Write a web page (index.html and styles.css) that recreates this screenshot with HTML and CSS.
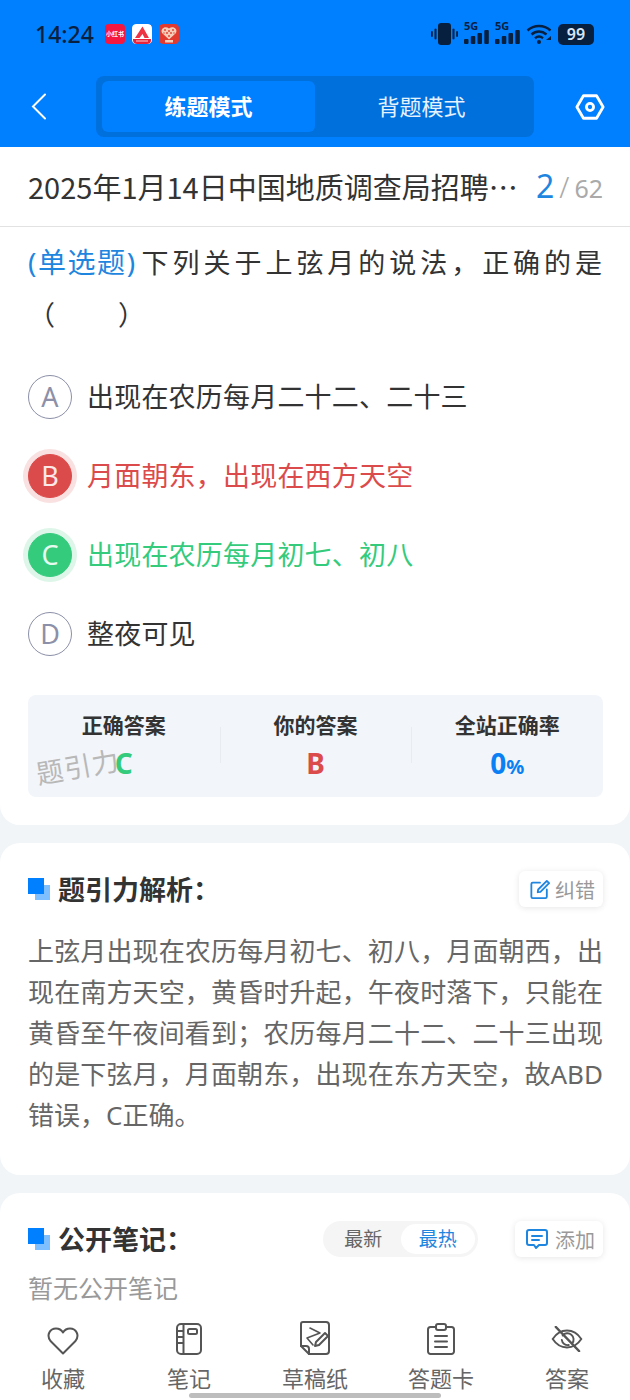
FILE: index.html
```html
<!DOCTYPE html>
<html lang="zh-CN">
<head>
    <meta charset="UTF-8">
    <meta name="viewport" content="width=device-width, initial-scale=1.0">
    <title>练题模式</title>
    <link rel="stylesheet" href="styles.css">
</head>
<body>
<div class="page">
    <header class="top">
        <div class="status">
            <span class="time">14:24</span>
            <div class="app-icons">
                <span class="app app-red">小红书</span>
                <svg class="app" viewBox="0 0 20 20"><rect width="20" height="20" rx="4" fill="#fff"/><path d="M3 14 L10.500 2.500 L17 14 L12.500 14 L10.500 10 L7.500 14Z" fill="#ee3344"/><path d="M1 15 H19 V16 A4 4 0 0 1 15 20 H5 A4 4 0 0 1 1 16Z" fill="#e8243c"/><rect x="4" y="16.500" width="12" height="1" fill="#fbd0d4"/></svg>
                <svg class="app" viewBox="0 0 20 20"><rect width="20" height="20" rx="4" fill="#e23a2e"/><path d="M10 15.500 L3 9 C1 5 6 1.500 10 4.500 C14 1.500 19 5 17 9Z" fill="#f5cdb9"/><g fill="#e23a2e"><circle cx="6" cy="6" r=".9"/><circle cx="10" cy="7" r=".9"/><circle cx="14" cy="6" r=".9"/><circle cx="8" cy="9" r=".9"/><circle cx="12" cy="9" r=".9"/><circle cx="5" cy="9" r=".7"/><circle cx="15" cy="9" r=".7"/><circle cx="10" cy="12" r=".9"/></g><rect x="6" y="16" width="8" height="2.500" fill="#f5cdb9"/></svg>
            </div>
            <div class="sys-icons">
                <svg width="27" height="22" viewBox="0 0 27 22" fill="#07203f"><rect x="7" width="13" height="22" rx="3"/><rect x="3.500" y="5.500" width="2" height="11" rx="1"/><rect y="8" width="1.800" height="6" rx=".9"/><rect x="21.500" y="5.500" width="2" height="11" rx="1"/><rect x="25.200" y="8" width="1.800" height="6" rx=".9"/></svg>
                <div class="net"><span>5G</span><svg width="25" height="22" viewBox="0 0 25 22" fill="#07203f"><rect y="16" width="4.500" height="5" rx="1"/><rect x="6.800" y="13" width="4.500" height="8" rx="1"/><rect x="13.500" y="10" width="4.500" height="11" rx="1"/><rect x="20.300" y="7" width="4.500" height="14" rx="1"/></svg></div>
                <div class="net"><span>5G</span><svg width="25" height="22" viewBox="0 0 25 22" fill="#07203f"><rect y="16" width="4.500" height="5" rx="1"/><rect x="6.800" y="13" width="4.500" height="8" rx="1"/><rect x="13.500" y="10" width="4.500" height="11" rx="1"/><rect x="20.300" y="7" width="4.500" height="14" rx="1"/></svg></div>
                <svg width="26" height="21" viewBox="0 0 26 21" fill="none" stroke="#07203f" stroke-width="2.400"><path d="M1.500 6.500 C8 .5 18 .5 24.500 6.500"/><path d="M5.500 10.500 C10 6.500 16 6.500 20.500 10.500"/><path d="M9 14.200 C11.500 12.200 14.500 12.200 17 14.200"/><circle cx="13" cy="18" r="2" fill="#07203f" stroke="none"/><path d="M20 16 L25 16 L25 12Z" fill="#07203f" stroke="none"/></svg>
                <span class="battery">99</span>
            </div>
        </div>
        <nav class="bar">
            <svg class="back" width="16" height="27" viewBox="0 0 16 27" fill="none" stroke="#fff" stroke-width="2" stroke-linecap="round"><path d="M14 1.500 L2 13.500 L14 25.500"/></svg>
            <div class="tabs">
                <span class="tab active">练题模式</span>
                <span class="tab">背题模式</span>
            </div>
            <svg class="gear" width="30" height="28" viewBox="0 0 32 28" fill="none" stroke="#fff" stroke-width="3" stroke-linejoin="round"><path d="M9 2 H23 L30 14 L23 26 H9 L2 14Z"/><circle cx="16" cy="14" r="3.800"/></svg>
        </nav>
    </header>

    <div class="title-row">
        <span class="title">2025年1月14日中国地质调查局招聘…</span>
        <span class="count"><b>2</b><i>/</i>62</span>
    </div>

    <main class="content">
        <section class="card question">
            <p class="stem"><span class="tag">(单选题)</span>下列关于上弦月的说法，正确的是</p>
            <p class="blank">（　　）</p>
            <ul class="options">
                <li class="option"><span class="mark">A</span><span class="opt-text">出现在农历每月二十二、二十三</span></li>
                <li class="option wrong"><span class="mark">B</span><span class="opt-text">月面朝东，出现在西方天空</span></li>
                <li class="option right"><span class="mark">C</span><span class="opt-text">出现在农历每月初七、初八</span></li>
                <li class="option"><span class="mark">D</span><span class="opt-text">整夜可见</span></li>
            </ul>
            <div class="stats">
                <div class="stat"><h4>正确答案</h4><strong class="green">C</strong></div>
                <div class="stat"><h4>你的答案</h4><strong class="red">B</strong></div>
                <div class="stat"><h4>全站正确率</h4><strong class="blue">0<small>%</small></strong></div>
                <span class="watermark">题引力</span>
            </div>
        </section>

        <section class="card analysis">
            <div class="card-head">
                <h3 class="heading"><span class="squares"></span><span class="head-text">题引力解析：</span></h3>
                <span class="mini-btn">
                    <svg width="20" height="21" viewBox="0 0 22 22" fill="none" stroke="#1f86e0" stroke-width="2" stroke-linecap="round" stroke-linejoin="round"><path d="M11 3.500 H3 A1.500 1.500 0 0 0 1.500 5 V19 A1.500 1.500 0 0 0 3 20.500 H17 A1.500 1.500 0 0 0 18.500 19 V11"/><path d="M18.500 1.500 L21 4 L11.500 13.500 L8.500 14 L9 11Z"/></svg>
                    纠错
                </span>
            </div>
            <p class="explain">上弦月出现在农历每月初七、初八，月面朝西，出现在南方天空，黄昏时升起，午夜时落下，只能在黄昏至午夜间看到；农历每月二十二、二十三出现的是下弦月，月面朝东，出现在东方天空，故ABD错误，C正确。</p>
        </section>

        <section class="card notes">
            <div class="card-head">
                <h3 class="heading"><span class="squares"></span><span class="head-text">公开笔记：</span></h3>
                <div class="note-tools">
                    <div class="sort"><span>最新</span><span class="on">最热</span></div>
                    <span class="mini-btn add">
                        <svg width="22" height="22" viewBox="0 0 22 22" fill="none" stroke="#1f86e0" stroke-width="2" stroke-linecap="round" stroke-linejoin="round"><path d="M3 2 H19 A2 2 0 0 1 21 4 V15 A2 2 0 0 1 19 17 H13 L10 20 L8 17 H3 A2 2 0 0 1 1 15 V4 A2 2 0 0 1 3 2Z"/><path d="M6 8 H16"/><path d="M6 12 H13"/></svg>
                        添加
                    </span>
                </div>
            </div>
            <p class="empty">暂无公开笔记</p>
        </section>
    </main>

    <footer class="tabbar">
        <div class="tool">
            <svg width="32" height="28" viewBox="0 0 32 28" fill="none" stroke="#555" stroke-width="2" stroke-linejoin="round"><path d="M16 26.500 L3.500 14 C-1 8 3 1.500 9 1.500 C12 1.500 14.500 3 16 5.500 C17.500 3 20 1.500 23 1.500 C29 1.500 33 8 28.500 14Z"/></svg>
            <span>收藏</span>
        </div>
        <div class="tool">
            <svg width="26" height="32" viewBox="0 0 26 32" fill="none" stroke="#555" stroke-width="2" stroke-linejoin="round"><rect x="1" y="1" width="24" height="30" rx="4"/><path d="M7.500 1 V31"/><path d="M1 8 H7.500 M1 14 H7.500 M1 20 H7.500"/><rect x="12" y="6" width="9" height="5" rx="1.500"/></svg>
            <span>笔记</span>
        </div>
        <div class="tool">
            <svg width="30" height="34" viewBox="0 0 30 34" fill="none" stroke="#555" stroke-width="2" stroke-linejoin="round" stroke-linecap="round"><path d="M3 1 H26 A3 3 0 0 1 29 4 V30 A3 3 0 0 1 26 33 H9 L1 25 V3 A2 2 0 0 1 3 1Z"/><path d="M1 25 H6 A3 3 0 0 1 9 28 V33"/><path d="M10 7 L20 12 L7 17 L13 24" stroke-width="1.600"/><path d="M25 12 L28 15 L19 24 L15 25 L16 21Z" fill="#fff"/></svg>
            <span>草稿纸</span>
        </div>
        <div class="tool">
            <svg width="28" height="32" viewBox="0 0 28 32" fill="none" stroke="#555" stroke-width="2" stroke-linecap="round" stroke-linejoin="round"><path d="M8 4 H3.500 A2.500 2.500 0 0 0 1 6.500 V28.500 A2.500 2.500 0 0 0 3.500 31 H24.500 A2.500 2.500 0 0 0 27 28.500 V6.500 A2.500 2.500 0 0 0 24.500 4 H20"/><rect x="9" y="1" width="10" height="6" rx="2"/><path d="M8 13 H20 M8 18.500 H20 M8 24 H20"/></svg>
            <span>答题卡</span>
        </div>
        <div class="tool">
            <svg class="eye" width="34" height="26" viewBox="0 0 36 30" fill="none" stroke="#555" stroke-width="2.200" stroke-linecap="round"><path d="M1.500 15 C10 2 26 2 34.500 15 C26 28 10 28 1.500 15Z"/><path d="M13 11 A7 7 0 0 1 24 20 M12 16 A7 7 0 0 0 20 22"/><path d="M5 1 L32 29" stroke-width="2.600"/></svg>
            <span>答案</span>
        </div>
        <div class="home-line"></div>
    </footer>
</div>
</body>
</html>
```

FILE: styles.css
```css
* {
    margin: 0;
    padding: 0;
    box-sizing: border-box;
}

body {
    font-family: "Noto Sans", "Noto Sans CJK SC", sans-serif;
    background: #f2f5f8;
    color: #333;
}

.page {
    position: relative;
    width: 630px;
    height: 1400px;
    overflow: hidden;
}

/* blue header */
.top {
    background: #007fff;
    height: 147px;
}

.status {
    height: 76px;
    display: flex;
    align-items: center;
    padding: 0 36px 8px 35px;
}

.time {
    font-size: 23px;
    font-weight: 500;
    color: #07203f;
}

.app-icons {
    display: flex;
    gap: 7px;
    margin-left: 11px;
}

.app {
    width: 20px;
    height: 20px;
    display: block;
    border-radius: 4px;
}

.app-red {
    background: #f5173f;
    color: #fff;
    font-size: 6px;
    font-weight: 700;
    line-height: 20px;
    text-align: center;
    white-space: nowrap;
    overflow: hidden;
}

.sys-icons {
    margin-left: auto;
    display: flex;
    align-items: center;
    gap: 6px;
}

.net {
    position: relative;
    display: flex;
}

.net span {
    position: absolute;
    left: 0;
    top: -3px;
    font-size: 11px;
    font-weight: 700;
    color: #07203f;
    line-height: 12px;
}

.battery {
    width: 36px;
    height: 21px;
    background: #07203f;
    color: #d8e6f5;
    border-radius: 5px;
    font-size: 16px;
    font-weight: 600;
    line-height: 21px;
    text-align: center;
}

.bar {
    display: flex;
    align-items: flex-start;
    padding-left: 31px;
}

.back {
    flex: none;
    margin-top: 17px;
}

.tabs {
    flex: none;
    margin-left: 49px;
    width: 438px;
    height: 61px;
    background: #0070dd;
    border-radius: 8px;
    padding: 5px 6px;
    display: flex;
}

.tab {
    flex: 1;
    font-size: 22px;
    line-height: 50px;
    text-align: center;
    color: #e6f2ff;
    border-radius: 6px;
}

.tab.active {
    background: #007fff;
    color: #fff;
    font-weight: 700;
}

.gear {
    flex: none;
    margin: 17px 0 0 41px;
}

/* title */
.title-row {
    height: 80px;
    background: #fff;
    border-bottom: 1px solid #e2e2e2;
    display: flex;
    align-items: center;
    justify-content: space-between;
    padding: 0 27px 2px 28px;
}

.title {
    font-family: "Noto Sans CJK SC", sans-serif;
    font-size: 29px;
    color: #333;
    white-space: nowrap;
}

.count {
    font-size: 25px;
    color: #aaa;
}

.count b {
    font-size: 32px;
    font-weight: 400;
    color: #1f86e0;
}

.count i {
    font-style: normal;
    font-size: 29px;
    font-weight: 300;
    margin: 0 5px;
}

/* cards */
.card {
    background: #fff;
    border-radius: 20px;
    padding: 0 27px 0 28px;
    margin-bottom: 18px;
}

.question {
    border-radius: 0 0 20px 20px;
    height: 598px;
    padding-top: 9px;
}

.stem,
.blank {
    font-size: 27px;
    line-height: 52px;
    letter-spacing: 3px;
    color: #333;
}

.stem {
    margin-right: -2px;
    white-space: nowrap;
    text-align: justify;
    text-align-last: justify;
}

.tag {
    color: #1f86e0;
    font-size: 28px;
    letter-spacing: 0.6px;
    margin-right: 5px;
}

.options {
    list-style: none;
    margin-top: 34px;
    display: flex;
    flex-direction: column;
    gap: 35px;
}

.option {
    display: flex;
    align-items: center;
    gap: 16px;
    height: 44px;
    font-size: 27px;
    color: #333;
}

.opt-text {
    letter-spacing: 0.2px;
    margin-left: -1px;
    padding-bottom: 3px;
}

.mark {
    width: 44px;
    height: 44px;
    border-radius: 50%;
    border: 1px solid #8c90a8;
    color: #8c90a8;
    font-size: 27px;
    line-height: 42px;
    text-align: center;
}

.wrong {
    color: #dc4b4b;
}

.wrong .mark {
    background: #dc4b4b;
    border-color: #dc4b4b;
    color: #fde8e8;
    box-shadow: 0 0 0 5px #f9e1e1;
}

.right {
    color: #34cb7d;
}

.right .mark {
    background: #34cb7d;
    border-color: #34cb7d;
    color: #e6faf0;
    box-shadow: 0 0 0 5px #def6e9;
}

.stats {
    position: relative;
    margin-top: 39px;
    height: 102px;
    background: #f2f5f9;
    border-radius: 8px;
    display: grid;
    grid-template-columns: repeat(3, 1fr);
    text-align: center;
}

.stat {
    padding-top: 15px;
    position: relative;
}

.stat + .stat::before {
    content: '';
    position: absolute;
    left: 0;
    top: 32px;
    height: 36px;
    width: 1px;
    background: #e8ebef;
}

.stat h4 {
    font-size: 21px;
    font-weight: 700;
    line-height: 30px;
    color: #333;
}

.stat strong {
    display: block;
    font-size: 28px;
    font-weight: 700;
    line-height: 40px;
    margin-top: 3px;
}

.stat small {
    font-size: 20px;
}

.green { color: #34cb7d; }
.red { color: #dc4b4b; }
.blue { color: #0a80f5; }

.watermark {
    position: absolute;
    left: 8px;
    top: 54px;
    font-size: 27px;
    line-height: 36px;
    color: #b8b8b8;
    transform: rotate(-10deg);
    letter-spacing: 1px;
}

.analysis {
    height: 332px;
    padding-top: 28px;
}

.card-head {
    display: flex;
    align-items: center;
    justify-content: space-between;
    height: 36px;
}

.heading {
    display: flex;
    align-items: center;
    font-size: 27px;
    font-weight: 700;
    color: #333;
}

.head-text {
    padding-bottom: 2px;
}

.squares {
    position: relative;
    width: 22px;
    height: 22px;
    margin-right: 8px;
}

.squares::before,
.squares::after {
    content: '';
    position: absolute;
    width: 15px;
    height: 15px;
}

.squares::before {
    right: 0;
    bottom: 0;
    background: #80bfff;
}

.squares::after {
    left: 0;
    top: 0;
    width: 16px;
    height: 16px;
    background: #007fff;
}

.mini-btn {
    display: flex;
    align-items: center;
    gap: 5px;
    height: 36px;
    padding: 0 8px 0 11px;
    background: #fff;
    border-radius: 6px;
    box-shadow: 0 1px 6px rgba(0, 0, 0, 0.1);
    font-size: 20px;
    color: #999;
}

.mini-btn.add {
    gap: 7px;
}

.explain {
    margin-top: 24px;
    font-size: 26px;
    line-height: 41px;
    text-align: justify;
    color: #666;
}

.notes {
    height: 300px;
    padding-top: 28px;
}

.note-tools {
    display: flex;
    align-items: center;
    gap: 37px;
}

.sort {
    display: flex;
    align-items: center;
    width: 155px;
    height: 36px;
    padding: 3px;
    border-radius: 18px;
    background: #f5f5f5;
    font-size: 19px;
    color: #666;
}

.sort span {
    flex: 1;
    text-align: center;
    line-height: 30px;
    border-radius: 15px;
}

.sort .on {
    background: #fff;
    color: #1f86e0;
}

.empty {
    margin-top: 12px;
    font-size: 25px;
    line-height: 38px;
    color: #999;
}

/* bottom tools, sits over the notes card */
.tabbar {
    position: absolute;
    left: 0;
    right: 0;
    bottom: 0;
    height: 92px;
    background: #fff;
    display: grid;
    grid-template-columns: repeat(5, 1fr);
}

.tool {
    display: flex;
    flex-direction: column;
    align-items: center;
    justify-content: flex-end;
    padding-bottom: 7px;
    gap: 8px;
    font-size: 22px;
    color: #666;
}

.tool span {
    line-height: 30px;
}

.eye {
    margin-bottom: 3px;
}

.home-line {
    position: absolute;
    left: 189px;
    bottom: 2px;
    width: 252px;
    height: 5px;
    border-radius: 3px;
    background: #bdbdbd;
}
```
